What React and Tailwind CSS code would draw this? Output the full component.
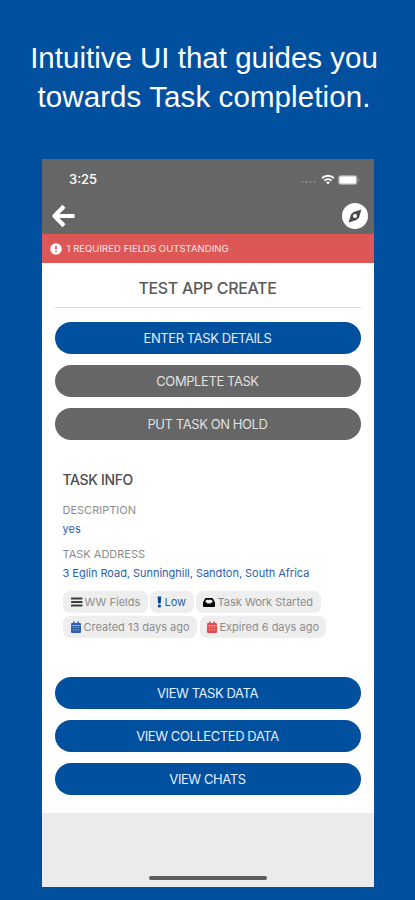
import React from "react";

function ActionButton({ children, className }) {
  return (
    <button
      className={
        "flex h-8 w-full items-center justify-center rounded-full pt-[2px] text-[13px] tracking-[-0.42px] whitespace-nowrap " +
        className
      }
    >
      {children}
    </button>
  );
}

function Tag({ icon, children, className }) {
  return (
    <span
      className={
        "flex h-[22px] items-center rounded-[7px] bg-[#eeeeee] text-[11px] whitespace-nowrap " + className
      }
    >
      {icon}
      {children}
    </span>
  );
}

function BarsIcon() {
  return (
    <svg width="12" height="10" viewBox="0 0 12 10" className="mr-[2px]" fill="#3c3c3c">
      <rect y="0.4" width="11.5" height="2" rx="0.4" />
      <rect y="4" width="11.5" height="2" rx="0.4" />
      <rect y="7.6" width="11.5" height="2" rx="0.4" />
    </svg>
  );
}

function AlertIcon() {
  return (
    <svg width="5" height="12" viewBox="0 0 5 12" className="mr-[3px]" fill="#00419a">
      <path d="M0.6 0.6h3.6L3.7 7.6H1.1z" />
      <circle cx="2.4" cy="10" r="1.6" />
    </svg>
  );
}

function InboxIcon() {
  return (
    <svg width="12" height="9" viewBox="0 0 12 9" className="mr-[3px]">
      <path d="M3 0h6q.6 0 .9.5L11.8 4q.2.3.2.7V8q0 1-1 1H1Q0 9 0 8V4.7q0-.4.2-.7L2.1.5Q2.400 0 3 0z" fill="black" />
      <path d="M3.300 1.700h5.400L10 4.300H8.500L7.900 5.400H4.100L3.500 4.300H2z" fill="#eeeeee" />
    </svg>
  );
}

function CalendarIcon({ className }) {
  return (
    <svg width="10" height="12" viewBox="0 0 10 12" className={"mr-[3px] " + className} fill="currentColor">
      <path d="M2 .5h1.6V2h2.800V.5H8V2h.9q1.100 0 1.100 1v1H0V3q0-1 1.100-1H2z" />
      <path d="M0 4.400h10V10.900q0 1-1.100 1H1.100Q0 11.900 0 10.900z" />
      <path
        d="M2 6.200h1.300M4.400 6.200h1.300M6.800 6.200h1.300M2 8.900h1.300M4.400 8.900h1.300M6.800 8.900h1.300"
        stroke="#eeeeee"
        strokeOpacity="0.5"
        strokeWidth="1.100"
      />
    </svg>
  );
}

function StatusBar() {
  return (
    <div className="flex h-[41px] items-center justify-between pr-[14px] pl-[27.500px]">
      <span className="text-[13px] font-medium">3:25</span>
      <div className="flex items-center">
        <svg width="16" height="4" viewBox="0 0 16 4" fill="#8e8e8e" className="mt-[5px]">
          <circle cx="1.5" cy="2" r="1" />
          <circle cx="5.5" cy="2" r="1" />
          <circle cx="9.5" cy="2" r="1" />
          <circle cx="13.5" cy="2" r="1" />
        </svg>
        <svg
          width="14"
          height="11"
          viewBox="0 0 14 11"
          fill="none"
          stroke="white"
          strokeWidth="2"
          className="mr-[-1px] ml-[4px]"
        >
          <path d="M1 4.1a8.7 8.7 0 0 1 12 0" />
          <path d="M3.4 6.6a5.2 5.2 0 0 1 7.2 0" />
          <path d="M7 10.6 5 8.5a2.9 2.9 0 0 1 4 0z" fill="white" stroke="none" />
        </svg>
        <svg width="22" height="10" viewBox="0 0 22 10" className="ml-[4px]">
          <rect x="0.5" y="0.5" width="18.5" height="9" rx="2.4" fill="none" stroke="#a0a0a0" />
          <rect x="1.3" y="1.2" width="17" height="7.6" rx="1.4" fill="white" />
          <path d="M20.3 3.3v3.4c1.2-.6 1.2-2.8 0-3.4z" fill="#a8a8a8" />
        </svg>
      </div>
    </div>
  );
}

function NavBar() {
  return (
    <div className="flex h-[34px] items-start justify-between pr-[6px] pl-[9px]">
      <svg
        width="25"
        height="24"
        viewBox="0 0 25 24"
        fill="none"
        stroke="white"
        strokeWidth="4.200"
        strokeLinejoin="round"
        className="mt-[4px]"
      >
        <path d="M13 2.200 3.500 12l9.500 9.800M3.500 12H23.500" />
      </svg>
      <svg width="26" height="26" viewBox="0 0 26 26" className="mt-[3px]">
        <circle cx="13" cy="13" r="13" fill="white" />
        <path d="M19.4 6.6 17 14.500 14.500 17 6.600 19.400 9 11.500 11.500 9z" fill="#4b4b4b" />
        <circle cx="13" cy="13" r="2" fill="white" />
      </svg>
    </div>
  );
}

export default function App() {
  return (
    <div className="flex h-[900px] w-[415px] flex-col items-center bg-[#00509f] font-['Inter',sans-serif] text-white">
      <h1 className="flex h-[159px] w-full flex-col items-center pt-[38px] pr-[7px] font-['Liberation_Sans',sans-serif] text-[29.500px] leading-[39px] whitespace-nowrap">
        <span>Intuitive UI that guides you</span>
        <span className="tracking-[0.1px]">towards Task completion.</span>
      </h1>
      <main className="flex h-[728px] w-[332px] flex-col bg-white text-[#8c8c8c]">
        <header className="h-[75px] bg-[#666666] text-white">
          <StatusBar />
          <NavBar />
        </header>
        <div className="flex h-[29px] items-center bg-[#dd5757] pl-[8px] text-[9.500px] text-[#fbe6e6]">
          <svg width="12" height="12" viewBox="0 0 12 12">
            <circle cx="6" cy="6" r="5.8" fill="white" />
            <path d="M6 3v3.6M6 7.7v1.5" stroke="#dd5757" strokeWidth="1.6" />
          </svg>
          <span className="ml-[5px] pt-[2px] tracking-[0.05px] whitespace-nowrap">1 REQUIRED FIELDS OUTSTANDING</span>
        </div>
        <section className="flex h-[550px] flex-col px-[13px]">
          <h2 className="flex h-[45px] items-center justify-center border-b border-[#dedede] pt-[5px] text-[16px] font-medium tracking-[-0.330px] text-[#5a5a5a]">
            TEST APP CREATE
          </h2>
          <div className="mt-[14px] flex flex-col gap-[11px]">
            <ActionButton className="bg-[#00509f] text-[#e4efff]">ENTER TASK DETAILS</ActionButton>
            <ActionButton className="bg-[#666666] text-[#e0e0e0]">COMPLETE TASK</ActionButton>
            <ActionButton className="bg-[#666666] text-[#e0e0e0]">PUT TASK ON HOLD</ActionButton>
          </div>
          <div className="flex flex-col px-[8px] pt-[30px] whitespace-nowrap">
            <h3 className="h-5 text-[14px] leading-5 font-medium tracking-[-0.350px] text-[#4c4c4c]">TASK INFO</h3>
            <span className="mt-[12px] h-4 text-[11px] leading-4">DESCRIPTION</span>
            <span className="mt-[3px] h-4 text-[11px] leading-4 text-[#2c60aa]">yes</span>
            <span className="mt-[9px] h-4 text-[11px] leading-4">TASK ADDRESS</span>
            <span className="mt-[3px] h-4 text-[11px] leading-4 tracking-[-0.03px] text-[#2c60aa]">
              3 Eglin Road, Sunninghill, Sandton, South Africa
            </span>
            <div className="mt-[10px] flex gap-[2px]">
              <Tag className="w-[85px] pl-[8px]" icon={<BarsIcon />}>
                WW Fields
              </Tag>
              <Tag className="w-[44px] pl-[7px] text-[#2c60aa]" icon={<AlertIcon />}>
                Low
              </Tag>
              <Tag className="w-[125px] pl-[7px]" icon={<InboxIcon />}>
                Task Work Started
              </Tag>
            </div>
            <div className="mt-[3px] flex gap-[3px]">
              <Tag className="w-[134px] pl-[8px]" icon={<CalendarIcon className="text-[#2c60aa]" />}>
                Created 13 days ago
              </Tag>
              <Tag className="w-[126px] pl-[7px]" icon={<CalendarIcon className="text-[#e04c4c]" />}>
                Expired 6 days ago
              </Tag>
            </div>
          </div>
          <div className="mt-[39px] flex flex-col gap-[11px]">
            <ActionButton className="bg-[#00509f] text-[#e4efff]">VIEW TASK DATA</ActionButton>
            <ActionButton className="bg-[#00509f] text-[#e4efff]">VIEW COLLECTED DATA</ActionButton>
            <ActionButton className="bg-[#00509f] text-[#e4efff]">VIEW CHATS</ActionButton>
          </div>
        </section>
        <footer className="flex flex-1 items-end justify-center bg-[#ebebeb] pb-[7px]">
          <div className="h-[4px] w-[118px] rounded-full bg-[#5c5c5c]" />
        </footer>
      </main>
    </div>
  );
}
